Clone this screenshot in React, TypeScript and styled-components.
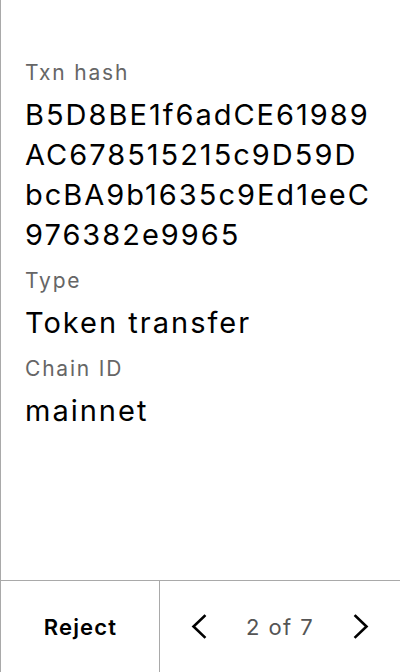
import React from "react";
import styled, { createGlobalStyle } from "styled-components";

const Global = createGlobalStyle`
  html, body { margin: 0; padding: 0; background: #fff; }
  body {
    font-family: Inter, "Noto Sans", sans-serif;
  }
  * { box-sizing: border-box; }
`;

const Screen = styled.div`
  width: 400px;
  height: 672px;
  display: flex;
  flex-direction: column;
  border-left: 1px solid #a9a9a9;
  background: #fff;
  color: #000;
`;

const Content = styled.div`
  flex: 1;
  padding: 59px 16px 0 24px;
  display: flex;
  flex-direction: column;
`;

const Field = styled.div`
  display: flex;
  flex-direction: column;
  padding-bottom: 12px;
`;

const Label = styled.div`
  font-size: 21px;
  line-height: 28px;
  letter-spacing: 1.8px;
  color: #666;
`;

const Value = styled.div`
  font-size: 29px;
  line-height: 40px;
  letter-spacing: 2px;
  margin-top: 8px;
  word-break: break-all;
`;

const HashLine = styled.span`
  display: block;
  white-space: nowrap;
`;

const Footer = styled.div`
  height: 92px;
  border-top: 1px solid #a9a9a9;
  display: grid;
  grid-template-columns: 159px 1fr;
`;

const RejectButton = styled.button`
  border: none;
  border-right: 1px solid #a9a9a9;
  background: transparent;
  font-family: inherit;
  font-size: 22px;
  font-weight: 600;
  letter-spacing: 1.2px;
  color: #000;
  display: flex;
  align-items: center;
  justify-content: center;
  padding: 0 0 0 1px;
`;

const Pager = styled.div`
  display: flex;
  align-items: center;
  justify-content: space-between;
  padding: 0 27px;
`;

const NavButton = styled.button`
  width: 24px;
  height: 28px;
  border: none;
  background: transparent;
  padding: 0;
  display: flex;
  align-items: center;
  justify-content: center;
  color: #000;
`;

const PageText = styled.span`
  font-size: 22px;
  letter-spacing: 1.4px;
  color: #555;
`;

const Chevron = ({ dir }: { dir: "left" | "right" }) => (
  <svg width="24" height="28" viewBox="0 0 24 28" fill="none">
    <polyline
      points={dir === "left" ? "17.5,3 6.5,13.5 17.5,24" : "6.5,3 17.5,13.5 6.5,24"}
      stroke="currentColor"
      strokeWidth="2.6"
      strokeLinecap="square"
      strokeLinejoin="miter"
    />
  </svg>
);

const HASH_LINES = [
  "B5D8BE1f6adCE61989",
  "AC678515215c9D59D",
  "bcBA9b1635c9Ed1eeC",
  "976382e9965",
];

export default function App() {
  return (
    <>
      <Global />
      <Screen>
        <Content>
          <Field>
            <Label>Txn hash</Label>
            <Value>
              {HASH_LINES.map((line) => (
                <HashLine key={line}>{line}</HashLine>
              ))}
            </Value>
          </Field>
          <Field>
            <Label>Type</Label>
            <Value>Token transfer</Value>
          </Field>
          <Field>
            <Label>Chain ID</Label>
            <Value>mainnet</Value>
          </Field>
        </Content>
        <Footer>
          <RejectButton>Reject</RejectButton>
          <Pager>
            <NavButton aria-label="Previous">
              <Chevron dir="left" />
            </NavButton>
            <PageText>2 of 7</PageText>
            <NavButton aria-label="Next">
              <Chevron dir="right" />
            </NavButton>
          </Pager>
        </Footer>
      </Screen>
    </>
  );
}
